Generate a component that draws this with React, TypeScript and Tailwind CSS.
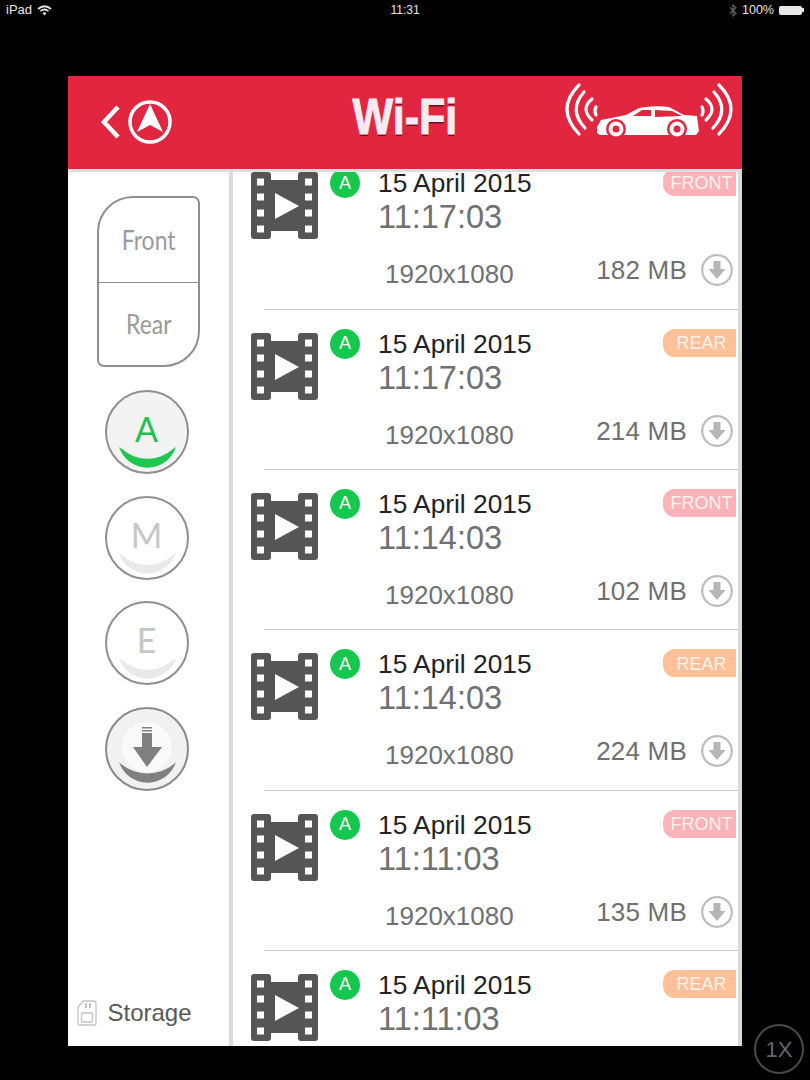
const sans = "font-['Liberation_Sans',Arial,sans-serif]";
const humanist = "font-['Lato','Open_Sans',sans-serif]";
const crescent = "M14 57A30 30 0 0 0 71 57L68 59A38 38 0 0 1 17 59Z";
const deepCrescent = "M14 55A30 30 0 0 0 71 55L69 57A42 42 0 0 1 16 57Z";

function Film() {
  const ys = [10, 25, 41, 57];
  return (
    <svg width="67" height="67" viewBox="0 0 67 67" className="block shrink-0">
      <path d="M3 0H17Q20 0 20 3V8H47V3Q47 0 50 0H64Q67 0 67 3V64Q67 67 64 67H50Q47 67 47 64V59H20V64Q20 67 17 67H3Q0 67 0 64V3Q0 0 3 0Z" fill="#555555" />
      {ys.map((y) => (
        <g key={y} fill="#ffffff">
          <rect x="6" y={y - 3.5} width="7" height="7" />
          <rect x="54" y={y - 3.5} width="7" height="7" />
        </g>
      ))}
      <path d="M24 21L48 34L24 47Z" fill="#ffffff" />
    </svg>
  );
}

function SmallDownload() {
  return (
    <svg width="32" height="32" viewBox="0 0 32 32" className="block shrink-0">
      <circle cx="16" cy="16" r="14.8" fill="none" stroke="#bdbdbd" strokeWidth="2.2" />
      <path d="M12.5 7H19.5V15H24.5L16 25L7.5 15H12.5Z" fill="#b5b5b5" />
    </svg>
  );
}

function ModeButton({ letter, active }: { letter: string; active?: boolean }) {
  return (
    <div className={`relative flex h-[84px] w-[84px] items-start justify-center rounded-full border-2 border-[#8f8f8f] ${active ? "bg-[#f3f3f3]" : "bg-white"}`}>
      <span className={`mt-[17px] text-[34px] leading-[40px] ${humanist} ${active ? "text-[#22c04f]" : "text-[#c6c6c6]"}`}>{letter}</span>
      <svg width="84" height="84" viewBox="0 0 84 84" className="absolute left-[-2px] top-[-2px]">
        <path d={crescent} fill={active ? "#1fc64f" : "#e9e9e9"} />
      </svg>
    </div>
  );
}

function DownloadButton() {
  return (
    <div className="relative h-[84px] w-[84px] rounded-full border-2 border-[#8a8a8a] bg-[#f1f1f1]">
      <svg width="84" height="84" viewBox="0 0 84 84" className="absolute left-[-2px] top-[-2px]">
        <circle cx="42" cy="40" r="25" fill="#fafafa" />
        <path d={deepCrescent} fill="#808080" />
        <path d="M37 20H47V21.5H37ZM37 23H47V24.5H37ZM37 26H47V40H57L42 60L28 40H37Z" fill="#808080" />
      </svg>
    </div>
  );
}

function BackLogo() {
  return (
    <svg width="74" height="50" viewBox="0 0 74 50" className="block">
      <path d="M18 10L4 25L18 40" fill="none" stroke="#ffffff" strokeWidth="4.5" />
      <circle cx="50" cy="25" r="20" fill="none" stroke="#ffffff" strokeWidth="3.5" />
      <path d="M50 7L63 35L50 28L37 35Z" fill="#ffffff" />
    </svg>
  );
}

function CarLogo() {
  return (
    <svg width="170" height="56" viewBox="0 0 170 56" className="block">
      <g fill="none" stroke="#ffffff" strokeWidth="3.2" strokeLinecap="round">
        <path d="M15 2Q-9 26 15 51" />
        <path d="M20 9Q4 27 21 45" />
        <path d="M28 16Q16 26 28 37" />
        <path d="M32 24Q30 28 32 32" />
        <path d="M155 2Q179 26 155 51" />
        <path d="M150 9Q166 27 149 45" />
        <path d="M142 16Q154 26 142 37" />
        <path d="M138 24Q140 28 138 32" />
      </g>
      <path d="M33 44L37 37L62 32L75 25Q90 22 105 24L120 32L133 33L135 48L132 52H36L33 50Z" fill="#ffffff" />
      <path d="M69 33H87V27H78ZM91 27V34L118 33L108 28Z" fill="#e32640" />
      {[52, 113].map((x) => (
        <g key={x}>
          <circle cx={x} cy="46" r="10" fill="#e32640" />
          <circle cx={x} cy="46" r="7.5" fill="#ffffff" />
          <circle cx={x} cy="46" r="3.5" fill="#e32640" />
        </g>
      ))}
    </svg>
  );
}

function Row({ time, size, tag, last }: { time: string; size?: string; tag: "FRONT" | "REAR"; last?: boolean }) {
  const front = tag === "FRONT";
  return (
    <div className="h-[160.33px] shrink-0 pl-[31px]">
      <div className={`flex h-full ${last ? "" : "border-b border-[#c9c9c9]"}`}>
        <div className="ml-[-13px] mt-[23px]"><Film /></div>
        <div className="ml-[12px] mt-[19px] flex h-[30px] w-[30px] shrink-0 items-center justify-center rounded-full bg-[#14c84e] text-[18px] text-white">A</div>
        <div className={`ml-[18px] mt-[19px] flex-1 ${sans}`}>
          <div className="text-[26.3px] leading-[30px] text-[#222222]">15 April 2015</div>
          <div className="mt-[3px] text-[32.5px] leading-[32px] text-[#707070]">{time}</div>
          {size && <div className="ml-[7px] mt-[26px] text-[26px] leading-[30px] text-[#707070]">1920x1080</div>}
        </div>
        <div className={`mt-[19px] mr-[2px] flex w-[146px] flex-col items-end ${sans}`}>
          <div className={`flex h-[28px] w-[73px] items-center justify-center rounded-l-[12px] pl-[4px] pt-[2px] text-[18px] text-[#fff1ec] ${front ? "bg-[#fbb3b9]" : "bg-[#fdc097]"}`}>{tag}</div>
          {size && (
            <div className="mt-[58px] flex items-center gap-[14px] pr-[3px]">
              <span className="text-[26px] leading-[32px] tracking-[0.2px] text-[#707070]">{size}</span>
              <SmallDownload />
            </div>
          )}
        </div>
      </div>
    </div>
  );
}

export default function App() {
  return (
    <div className={`relative h-[1080px] w-[810px] overflow-hidden bg-black ${sans}`}>
      <div className="flex h-[20px] items-center justify-between pl-[6px] pr-[6px] text-[13px] text-[#e5e5e5]">
        <div className="flex w-[120px] items-center gap-[5px]">
          <span>iPad</span>
          <svg width="15" height="11" viewBox="0 0 15 11">
            <path d="M1 4Q7.5 -1.5 14 4M3.5 6.2Q7.5 2.8 11.5 6.2" fill="none" stroke="#e5e5e5" strokeWidth="1.7" />
            <path d="M5.5 8Q7.5 6.4 9.5 8L7.5 10.5Z" fill="#e5e5e5" />
          </svg>
        </div>
        <span className="text-[12px]">11:31</span>
        <div className="flex w-[120px] items-center justify-end gap-[5px]">
          <svg width="8" height="13" viewBox="0 0 8 13">
            <path d="M1 3.5L7 9.5L4 12V1L7 3.5L1 9.5" fill="none" stroke="#666666" strokeWidth="1.1" />
          </svg>
          <span className="text-[12.5px]">100%</span>
          <div className="flex items-center">
            <div className="h-[9px] w-[23px] rounded-[2px] bg-[#e8e8e8]" />
            <div className="h-[4px] w-[2px] bg-[#e8e8e8]" />
          </div>
        </div>
      </div>

      <div className="ml-[68px] mt-[56px] flex h-[970px] w-[674px] flex-col bg-white">
        <header className="relative flex h-[93px] shrink-0 items-start justify-between bg-[#e32640] pl-[32px] pr-[8px] pt-[7px]">
          <div className="mt-[14px]"><BackLogo /></div>
          <div className="absolute inset-x-0 top-[9px] text-center">
            <span className="inline-block origin-center scale-x-[0.86] text-[50px] leading-[64px] font-bold text-[#f6ebf3] [-webkit-text-stroke:1px_#f6ebf3] [text-shadow:0_2px_0_#6f1020]">Wi-Fi</span>
          </div>
          <CarLogo />
        </header>
        <div className="flex min-h-0 flex-1 border-t-[3px] border-[#e2dcdc]">
          <aside className="flex w-[161px] shrink-0 flex-col items-center">
            <div className={`mt-[24px] flex h-[171px] w-[103px] flex-col rounded-bl-[7px] rounded-br-[36px] rounded-tl-[36px] rounded-tr-[7px] border-2 border-[#8f8f8f] text-[27px] text-[#9a9a9a] ${humanist}`}>
              <div className="flex h-[85px] items-center justify-center border-b-[1.5px] border-[#8f8f8f]"><span className="scale-x-[0.85]">Front</span></div>
              <div className="flex flex-1 items-center justify-center"><span className="scale-x-[0.85]">Rear</span></div>
            </div>
            <div className="ml-[-4px] mt-[23px] flex flex-col gap-[21.6px]">
              <ModeButton letter="A" active />
              <ModeButton letter="M" />
              <ModeButton letter="E" />
              <DownloadButton />
            </div>
            <div className="mt-auto mb-[18px] mr-[28px] flex items-center gap-[10px]">
              <svg width="20" height="26" viewBox="0 0 20 26" fill="none" stroke="#c4c4c4" strokeWidth="1.3">
                <path d="M6 1H17Q19 1 19 3V23Q19 25 17 25H3Q1 25 1 23V7Z" />
                <rect x="4.5" y="13" width="11" height="9" rx="1" />
                <path d="M9 3V8M13 3V8" strokeWidth="2" />
              </svg>
              <span className="text-[24px] leading-[30px] text-[#585858]">Storage</span>
            </div>
          </aside>
          <div className="w-[4px] shrink-0 bg-[#dcdcdc]" />
          <main className="flex min-w-0 flex-1 flex-col overflow-hidden border-r-[4px] border-[#d9d9d9]">
            <div className="mt-[-22.7px] flex flex-col">
              <Row time="11:17:03" size="182 MB" tag="FRONT" />
              <Row time="11:17:03" size="214 MB" tag="REAR" />
              <Row time="11:14:03" size="102 MB" tag="FRONT" />
              <Row time="11:14:03" size="224 MB" tag="REAR" />
              <Row time="11:11:03" size="135 MB" tag="FRONT" />
              <Row time="11:11:03" tag="REAR" last />
            </div>
          </main>
        </div>
      </div>

      <div className="absolute left-[754px] top-[1024px] flex h-[50px] w-[50px] items-center justify-center rounded-full border-2 border-[#4a4a4a] text-[22px] font-light text-[#666666]">1X</div>
    </div>
  );
}
